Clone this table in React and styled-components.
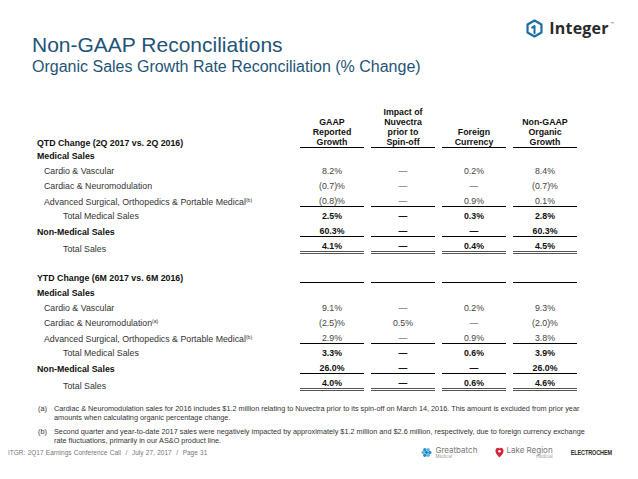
import styled, { createGlobalStyle } from "styled-components";

const GlobalStyle = createGlobalStyle`
  html, body {
    margin: 0;
    padding: 0;
    background: #ffffff;
  }
  body {
    font-family: "Liberation Sans", Arial, sans-serif;
    color: #222;
  }
`;

const Slide = styled.div`
  width: 638px;
  height: 479px;
  box-sizing: border-box;
  padding-bottom: 19px;
  overflow: hidden;
  background: #fff;
  display: flex;
  flex-direction: column;
`;

const TopBar = styled.div`
  display: flex;
  justify-content: space-between;
  align-items: flex-start;
`;

const Titles = styled.div`
  padding: 34px 0 0 32px;
`;

const Title = styled.h1`
  margin: 0;
  font-size: 21px;
  line-height: 21px;
  font-weight: 400;
  color: #1e5478;
`;

const Subtitle = styled.h2`
  margin: 4px 0 0;
  font-size: 16px;
  line-height: 16px;
  font-weight: 400;
  color: #1e5478;
`;

const Logo = styled.div`
  display: flex;
  align-items: center;
  gap: 6px;
  margin: 18px 24px 0 0;
`;

const LogoWord = styled.span`
  font-family: "Open Sans", "Liberation Sans", sans-serif;
  font-size: 16px;
  line-height: 20px;
  font-weight: 700;
  color: #2a2a2a;
  letter-spacing: 0.2px;
`;

const Trademark = styled.span`
  font-size: 4px;
  line-height: 0;
  font-weight: 400;
  vertical-align: 9px;
  margin-left: 2px;
  color: #555;
`;

const Table = styled.div`
  display: flex;
  flex-direction: column;
  padding-left: 37px;
  margin-top: ${(p) => p.$top || 0}px;
`;

const Row = styled.div`
  display: grid;
  grid-template-columns: 256px repeat(4, 64px);
  column-gap: 7px;
  align-items: end;
  margin-top: ${(p) => p.$gap ?? 5}px;
  font-size: 8.8px;
  line-height: 10px;
`;

const Label = styled.div`
  font-weight: ${(p) => (p.$bold ? 700 : 400)};
  padding-left: ${(p) => p.$indent || 0}px;
  color: ${(p) => (p.$bold ? "#111" : "#333")};
  white-space: nowrap;
`;

const Head = styled.div`
  text-align: center;
  font-weight: 700;
  color: #111;
  border-bottom: 1px solid #000;
`;

const Cell = styled.div`
  text-align: center;
  height: 10px;
  font-weight: ${(p) => (p.$bold ? 700 : 400)};
  color: ${(p) => (p.$bold ? "#111" : "#444")};
  border-bottom: ${(p) =>
    p.$line === "double"
      ? "3px double #555"
      : p.$line === "single"
      ? "1px solid #000"
      : "none"};
`;

const Sup = styled.sup`
  font-size: 5px;
  line-height: 0;
  vertical-align: 3px;
`;

const Notes = styled.div`
  display: flex;
  flex-direction: column;
  gap: 5px;
  padding-left: 38px;
  margin-top: 13px;
  font-size: 7.3px;
  line-height: 9px;
  color: #333;
`;

const Note = styled.div`
  display: flex;
`;

const Marker = styled.span`
  width: 16px;
  flex: none;
`;

const Footer = styled.div`
  margin-top: auto;
  display: flex;
  align-items: center;
  height: 16px;
  padding: 0 26px 0 8px;
`;

const FooterText = styled.span`
  font-size: 6.5px;
  color: #777;
  word-spacing: 0.5px;
`;

const Brands = styled.div`
  margin-left: auto;
  display: flex;
  align-items: center;
  gap: 18px;
`;

const Brand = styled.div`
  display: flex;
  align-items: center;
  gap: ${(p) => p.$gap || 3}px;
`;

const BrandName = styled.div`
  display: flex;
  flex-direction: column;
  font-family: "Inter", "Liberation Sans", sans-serif;
  font-size: 8px;
  line-height: 8px;
  color: #777;
  small {
    font-size: 4.5px;
    line-height: 5px;
    color: #999;
    text-align: ${(p) => (p.$subRight ? "right" : "left")};
  }
`;

const ElectroChem = styled.span`
  font-size: 5.5px;
  font-weight: 700;
  letter-spacing: -0.1px;
  color: #2a2a2a;
  transform: scaleY(1.2);
`;

function IntegerIcon() {
  return (
    <svg width="17" height="19" viewBox="0 0 20 22">
      <path
        d="M10 1.6 L18.2 6.3 V15.7 L10 20.4 L1.8 15.7 V6.3 Z"
        fill="none"
        stroke="#1c6fa3"
        strokeWidth="2.6"
        strokeLinejoin="round"
      />
      <path
        d="M10 16.5 V8.2 L7.2 9.9"
        fill="none"
        stroke="#1c6fa3"
        strokeWidth="2.4"
        strokeLinecap="round"
        strokeLinejoin="round"
      />
    </svg>
  );
}

function GreatbatchIcon() {
  const dots = [0, 60, 120, 180, 240, 300];
  return (
    <svg width="11" height="11" viewBox="0 0 12 12">
      {dots.map((a) => (
        <circle
          key={a}
          cx={6 + 3.6 * Math.cos((a * Math.PI) / 180)}
          cy={6 + 3.6 * Math.sin((a * Math.PI) / 180)}
          r="1.9"
          fill={a % 120 === 0 ? "#2b8fd0" : "#5bb6e6"}
        />
      ))}
      <circle cx="6" cy="6" r="1.6" fill="#1f74b5" />
    </svg>
  );
}

function LakeRegionIcon() {
  return (
    <svg width="9" height="11" viewBox="0 0 10 12">
      <path
        d="M5 11.5 C3 9.5 0.5 7.2 0.5 4.3 C0.5 2.2 2 0.8 3.5 0.8 C4.3 0.8 4.7 1.2 5 1.7 C5.3 1.2 5.7 0.8 6.5 0.8 C8 0.8 9.5 2.2 9.5 4.3 C9.5 7.2 7 9.5 5 11.5 Z"
        fill="#d3263a"
      />
      <circle cx="5" cy="4.6" r="1.5" fill="#fff" />
    </svg>
  );
}

function DataRow({ label, indent, bold, boldLabel, values, line, gap }) {
  return (
    <Row $gap={gap}>
      <Label $bold={boldLabel ?? bold} $indent={indent}>
        {label}
      </Label>
      {values.map((v, i) => (
        <Cell key={i} $bold={bold} $line={line}>
          {v}
        </Cell>
      ))}
    </Row>
  );
}

function Section({ title, rows, header, top }) {
  return (
    <Table $top={top}>
      {header ? (
        <Row $gap={0}>
          <Label $bold>{title}</Label>
          <Head>
            GAAP
            <br />
            Reported
            <br />
            Growth
          </Head>
          <Head>
            Impact of
            <br />
            Nuvectra
            <br />
            prior to
            <br />
            Spin-off
          </Head>
          <Head>
            Foreign
            <br />
            Currency
          </Head>
          <Head>
            Non-GAAP
            <br />
            Organic
            <br />
            Growth
          </Head>
        </Row>
      ) : (
        <DataRow label={title} bold gap={0} values={["", "", "", ""]} line="single" />
      )}
      <DataRow label="Medical Sales" bold gap={header ? 3 : 5} values={["", "", "", ""]} />
      {rows.map((r, i) => (
        <DataRow key={i} {...r} />
      ))}
    </Table>
  );
}

const advanced = (
  <>
    Advanced Surgical, Orthopedics &amp; Portable Medical<Sup>(b)</Sup>
  </>
);

const qtdRows = [
  { label: "Cardio & Vascular", indent: 7, values: ["8.2%", "—", "0.2%", "8.4%"] },
  { label: "Cardiac & Neuromodulation", indent: 7, values: ["(0.7)%", "—", "—", "(0.7)%"] },
  { label: advanced, indent: 7, values: ["(0.8)%", "—", "0.9%", "0.1%"], line: "single" },
  { label: "Total Medical Sales", indent: 26, bold: true, boldLabel: false, values: ["2.5%", "—", "0.3%", "2.8%"], gap: 4 },
  { label: "Non-Medical Sales", bold: true, values: ["60.3%", "—", "—", "60.3%"], line: "single" },
  { label: "Total Sales", indent: 26, bold: true, boldLabel: false, values: ["4.1%", "—", "0.4%", "4.5%"], line: "double", gap: 4 },
];

const ytdRows = [
  { label: "Cardio & Vascular", indent: 7, values: ["9.1%", "—", "0.2%", "9.3%"] },
  {
    label: (
      <>
        Cardiac &amp; Neuromodulation<Sup>(a)</Sup>
      </>
    ),
    indent: 7,
    values: ["(2.5)%", "0.5%", "—", "(2.0)%"],
  },
  { label: advanced, indent: 7, values: ["2.9%", "—", "0.9%", "3.8%"], line: "single" },
  { label: "Total Medical Sales", indent: 26, bold: true, boldLabel: false, values: ["3.3%", "—", "0.6%", "3.9%"], gap: 4 },
  { label: "Non-Medical Sales", bold: true, values: ["26.0%", "—", "—", "26.0%"], line: "single" },
  { label: "Total Sales", indent: 26, bold: true, boldLabel: false, values: ["4.0%", "—", "0.6%", "4.6%"], line: "double", gap: 4 },
];

export default function App() {
  return (
    <>
      <GlobalStyle />
      <Slide>
        <TopBar>
          <Titles>
            <Title>Non-GAAP Reconciliations</Title>
            <Subtitle>Organic Sales Growth Rate Reconciliation (% Change)</Subtitle>
          </Titles>
          <Logo>
            <IntegerIcon />
            <LogoWord>
              Integer
              <Trademark>™</Trademark>
            </LogoWord>
          </Logo>
        </TopBar>

        <Section title="QTD Change (2Q 2017 vs. 2Q 2016)" header rows={qtdRows} top={32} />
        <Section title="YTD Change (6M 2017 vs. 6M 2016)" rows={ytdRows} top={18} />

        <Notes>
          <Note>
            <Marker>(a)</Marker>
            <span>
              Cardiac &amp; Neuromodulation sales for 2016 includes $1.2 million relating to Nuvectra prior to its
              spin-off on March 14, 2016. This amount is excluded from prior year
              <br />
              amounts when calculating organic percentage change.
            </span>
          </Note>
          <Note>
            <Marker>(b)</Marker>
            <span>
              Second quarter and year-to-date 2017 sales were negatively impacted by approximately $1.2 million and
              $2.6 million, respectively, due to foreign currency exchange
              <br />
              rate fluctuations, primarily in our AS&amp;O product line.
            </span>
          </Note>
        </Notes>

        <Footer>
          <FooterText>ITGR: 2Q17 Earnings Conference Call&nbsp; / &nbsp;July 27, 2017&nbsp; / &nbsp;Page 31</FooterText>
          <Brands>
            <Brand>
              <GreatbatchIcon />
              <BrandName>
                Greatbatch
                <small>Medical</small>
              </BrandName>
            </Brand>
            <Brand $gap={2}>
              <LakeRegionIcon />
              <BrandName $subRight>
                Lake Region
                <small>medical</small>
              </BrandName>
            </Brand>
            <ElectroChem>ELECTROCHEM</ElectroChem>
          </Brands>
        </Footer>
      </Slide>
    </>
  );
}
